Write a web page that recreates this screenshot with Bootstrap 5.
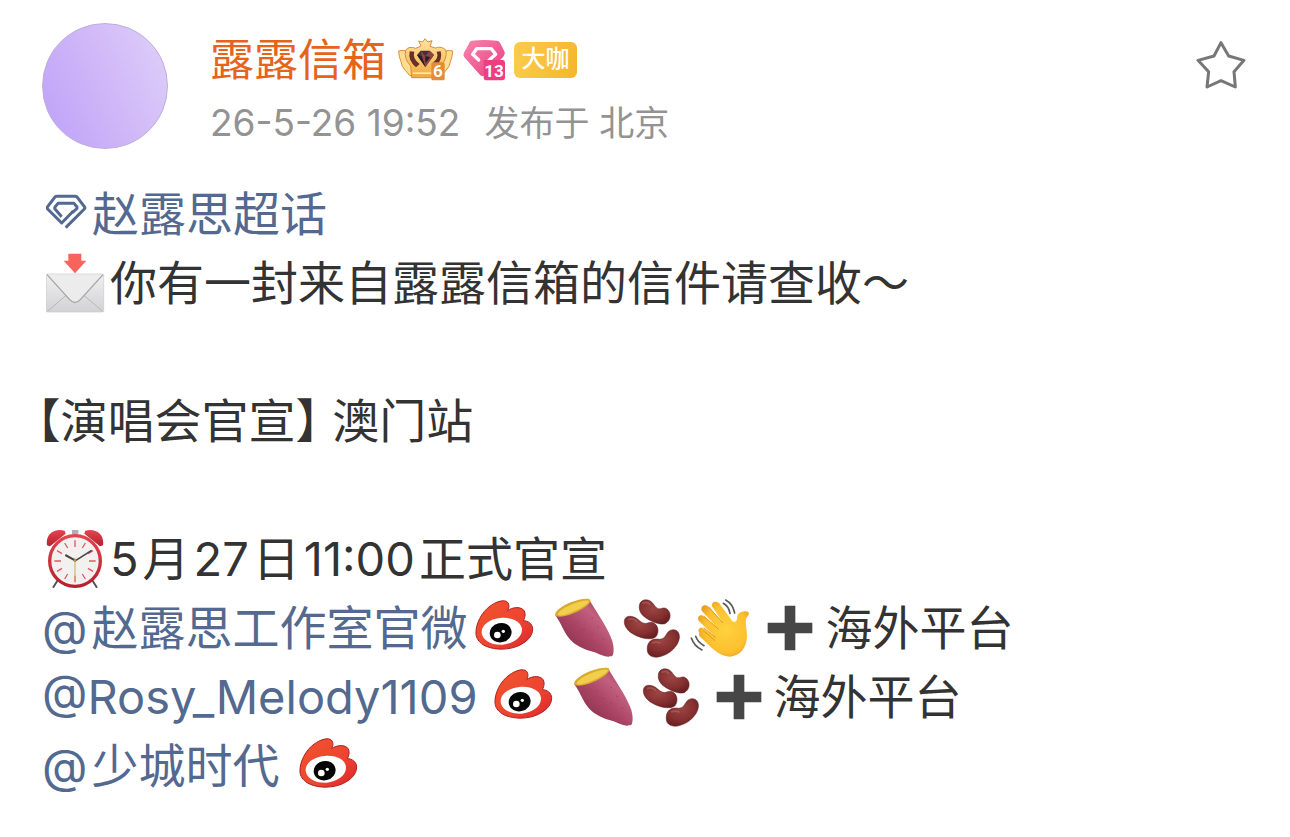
<!DOCTYPE html>
<html lang="zh-CN">
<head>
<meta charset="utf-8">
<meta name="viewport" content="width=device-width, initial-scale=1">
<title>露露信箱</title>
<link rel="stylesheet" href="https://cdn.jsdelivr.net/npm/bootstrap@5.3.0/dist/css/bootstrap.min.css">
<style>
body{background:#fff;color:#333;font-family:Inter,"Noto Sans CJK SC",sans-serif}
.post{padding:23px 44px 32px 42px}
.avatar{width:126px;height:126px;border:1px solid #bfaedb;background:linear-gradient(65deg,#c0a4f8 8%,#d0b8f8 52%,#dccbf9 90%)}
.who{margin-left:42px;padding-top:4px}
.nick{font-size:44px;line-height:66px;color:#e6631a;margin-right:12px}
.vip{width:63px;height:36px;border-radius:6px;font-size:24px;line-height:34px;font-weight:500;color:#fff;background:linear-gradient(100deg,#fccb4c,#f5b62e)}
.meta{font-size:35px;line-height:60px;color:#939393}
.meta time{font-size:37px}
.fav{margin-top:18px}
.body-text{margin-top:26px;font-size:47px}
.line{min-height:69px;line-height:69px}
.line a{color:#53698f}
.num{margin:0 4px}
.num:first-child{margin-left:0}
.apart{margin-left:20px}
.half{font-feature-settings:"halt";margin-left:-5px}
svg{display:block;flex:none}
</style>
</head>
<body>
<svg width="0" height="0" class="position-absolute" aria-hidden="true">
<defs>
<linearGradient id="gold" x1="0" y1="0" x2="0" y2="1"><stop offset="0" stop-color="#ffe7a4"/><stop offset="1" stop-color="#f3a93c"/></linearGradient>
<linearGradient id="pink" x1="0" y1="0" x2="1" y2="1"><stop offset="0" stop-color="#f986ab"/><stop offset="1" stop-color="#e83c83"/></linearGradient>
<linearGradient id="paper" x1="0" y1="0" x2="0" y2="1"><stop offset="0" stop-color="#f0f0f1"/><stop offset="1" stop-color="#d2d2d4"/></linearGradient>
<linearGradient id="flame" x1="0" y1="0" x2="1" y2="1"><stop offset="0" stop-color="#f0542d"/><stop offset=".6" stop-color="#ee4431"/><stop offset="1" stop-color="#d9252b"/></linearGradient>
<linearGradient id="skin" x1="0" y1="1" x2="1" y2="0"><stop offset="0" stop-color="#75273f"/><stop offset=".45" stop-color="#a94364"/><stop offset=".7" stop-color="#c3607f"/><stop offset="1" stop-color="#8c2e4b"/></linearGradient>
<radialGradient id="bean" cx=".45" cy=".35" r=".7"><stop offset="0" stop-color="#9c4542"/><stop offset=".6" stop-color="#853031"/><stop offset="1" stop-color="#651f20"/></radialGradient>
<radialGradient id="hand" cx=".55" cy=".5" r=".6"><stop offset="0" stop-color="#ffd23e"/><stop offset=".7" stop-color="#fcc02f"/><stop offset="1" stop-color="#e99c1f"/></radialGradient>
<linearGradient id="ring" x1="0" y1="0" x2="0" y2="1"><stop offset="0" stop-color="#e2454f"/><stop offset="1" stop-color="#b5202c"/></linearGradient>
<symbol id="weibo" viewBox="15 20 177 180">
<path d="M18 128C16 100 34 62 62 43C78 32 97 25 109 30C118 35 119 48 113 58C126 48 148 45 160 55C168 63 166 78 160 88C174 88 187 97 188 112C189 136 166 157 133 168C102 177 63 175 39 160C26 151 19 141 18 128Z" fill="url(#flame)" stroke="#ad2220" stroke-width="3"/>
<path d="M35 124C34 101 58 83 92 80C125 77 153 90 156 112C158 138 130 157 98 160C63 162 37 146 35 124Z" fill="#fff"/>
<ellipse cx="92" cy="124" rx="33" ry="29" transform="rotate(-12 92 124)" fill="#050505"/><circle cx="82" cy="131" r="10" fill="#fff"/><circle cx="100" cy="120" r="5" fill="#fff"/>
</symbol>
<symbol id="potato" viewBox="252 20 183 183">
<path d="M256 76C266 84 276 112 292 137C308 160 332 174 361 182C382 187 398 199 416 199C422 196 424 201 429 193C432 184 432 170 427 152C418 123 390 80 360 32Z" fill="url(#skin)"/>
<path d="M255 75C254 62 276 46 304 35C332 25 357 22 361 29C364 40 340 57 311 69C287 79 260 83 255 75Z" fill="#d8ab2d"/><path d="M263 73C265 63 285 50 308 41C332 31 353 28 357 32C354 43 332 55 308 65C287 74 269 78 263 73Z" fill="#f1ce4b"/>
<path d="M365 85l3-2M383 110l3 2M340 118l4-1M365 132l3 2M398 148l4-2M323 95l2 2" stroke="#8f3855" stroke-width="2" stroke-linecap="round"/>
</symbol>
<symbol id="beans" viewBox="27 20 174 180">
<g fill="url(#bean)" stroke="#5a1c1c" stroke-width="1.5"><path d="M76 43C78 27 94 21 109 29C120 36 123 49 132 52C142 54 151 44 162 56C173 69 170 89 153 97C138 102 113 91 96 80C81 70 74 57 76 43Z"/>
<path d="M31 89C32 76 46 71 62 78C75 84 79 94 91 96C102 98 109 88 121 96C134 104 136 126 125 137C110 148 79 141 57 128C40 118 30 104 31 89Z"/>
<path d="M101 183C96 164 105 147 119 144C132 141 141 148 151 138C159 128 161 117 176 115C190 114 198 125 196 141C193 164 169 187 142 195C124 201 106 197 101 183Z"/></g>
<path d="M87 36q12-7 20 3M44 84q14-5 24 6M116 154q12-4 22 1" stroke="#c0827c" stroke-opacity=".4" stroke-width="5" stroke-linecap="round" fill="none"/>
</symbol>
<symbol id="plus" viewBox="459 42 138 138"><path d="M512 44h32v51h51v32h-51v51h-32v-51h-51V95h51Z" fill="#464646"/></symbol>
</defs>
</svg>

<main class="container-fluid post">
<header class="d-flex align-items-start">
<div class="avatar rounded-circle flex-shrink-0" role="img" aria-label="头像"></div>
<div class="who flex-grow-1">
<div class="d-flex align-items-center">
<a href="#" class="nick text-decoration-none">露露信箱</a>
<svg class="overflow-visible" width="56" height="44" viewBox="25 18 168 132" aria-label="等级 6">
<g stroke="#dc8b3e" stroke-width="3" stroke-linejoin="round"><path d="M27 57Q47 51 63 67L76 137Q56 132 48 116Q35 104 34 89Q27 73 27 57ZM189 57Q169 51 153 67L140 137Q160 132 168 116Q181 104 182 89Q189 73 189 57Z" fill="#ffdf8e"/>
<path d="M48 54Q59 41 78 49L94 42L87 27L99 30L106 20L115 30L127 26L121 43L137 48Q157 41 169 55Q173 82 153 102L150 137H66L63 102Q42 80 48 54Z" fill="url(#gold)"/></g>
<path d="M60 58Q54 86 79 106L90 96Q67 79 74 59ZM153 58Q160 82 139 103L129 93Q149 77 141 59Z" fill="#67312a"/><path d="M82 69L93 56H120L133 69L107 105Z" fill="#42303a"/><path d="M93 56L107 72L120 56L133 69L107 105L96 72Z" fill="#8f4440"/><path d="M82 69L96 72L107 105ZM107 72L122 76L107 93Z" fill="#241e2a"/><path d="M69 121h60v5H69" fill="#ffe9a3"/>
<rect x="125" y="91" width="40" height="54" rx="5" fill="#e38c38"/><text x="145" y="136" text-anchor="middle" font-size="51" font-weight="700" fill="#fff" font-family="Roboto,sans-serif">6</text></svg>
<svg class="ms-2 overflow-visible" width="44" height="42" viewBox="213 24 132 126" aria-label="等级 13">
<path d="M242 29Q279 25 317 29Q323 29 327 35L341 63Q343 70 337 77L280 133Q274 138 268 133L220 79Q215 72 219 65L236 34Q238 30 242 29Z" fill="url(#pink)"/>
<path d="M263 87L245 70L257 53H301L314 70L294 88" fill="none" stroke="#fff" stroke-width="10" stroke-linejoin="round" stroke-linecap="round"/>
<path d="M278 87H334Q342 87 342 96V139Q342 148 333 148H285Q278 148 278 139Z" fill="#ec3e81"/><text x="309" y="137" text-anchor="middle" font-size="51" font-weight="700" fill="#fff" font-family="Roboto,sans-serif">13</text></svg>
<span class="vip ms-2 text-center">大咖</span>
</div>
<div class="meta d-flex flex-wrap align-items-center"><time>26-5-26 19:52</time><span class="ms-4">发布于 北京</span></div>
</div>
<button type="button" class="fav btn p-0 border-0" aria-label="收藏"><svg width="50" height="48" viewBox="48 33 150 144"><path d="M123 38L146 78L192 91L162 125L166 171L123 152L81 171L86 125L54 91L102 78Z" fill="none" stroke="#777" stroke-width="9" stroke-linejoin="round"/></svg></button>
</header>

<article class="body-text">
<div class="line d-flex align-items-center"><a href="#" class="d-flex align-items-center text-decoration-none">
<svg class="ms-1 me-1" width="42" height="42" viewBox="48 40 126 126" aria-hidden="true"><g fill="none" stroke="#53698f" stroke-width="9" stroke-linejoin="round"><path d="M107 144L163 88Q166 85 163 81L142 53Q140 50 136 50H80Q76 50 74 53L53 81Q50 85 53 88L95 130L130 94"/><path d="M95 111L75 88Q73 85 75 82L84 71H132L141 82Q142 86 139 88L127 99"/></g></svg><span>赵露思超话</span></a></div>
<div class="line d-flex align-items-center"><svg class="ms-1 me-1" width="60" height="61" viewBox="48 215 180 183" role="img" aria-label="来信">
<rect x="49" y="281" width="172" height="114" rx="4" fill="url(#paper)" stroke="#c9c9ca" stroke-width="2"/><path d="M52 393L112 342M218 393L158 342" stroke="#b7b7b9" stroke-width="3"/><path d="M51 283L119 358Q135 375 151 358L219 283" fill="#ececed" stroke="#a5a5a7" stroke-width="4"/><path d="M115 220H154V241H169L135 279L101 241H115Z" fill="#f8645b"/></svg><span>你有一封来自露露信箱的信件请查收～</span></div>
<div class="line"></div>
<div class="line"><span class="half d-inline-block">【演唱会官宣】</span> 澳门站</div>
<div class="line"></div>
<div class="line d-flex align-items-center"><svg class="ms-1 me-1" width="60" height="61" viewBox="48 36 180 183" role="img" aria-label="闹钟">
<path d="M85 190L69 215M185 190L201 215" stroke="#555" stroke-width="6"/><path d="M51 88C46 57 70 36 104 44L107 53L60 91ZM219 88C224 57 200 36 166 44L163 53L210 91Z" fill="url(#ring)"/><path d="M126 42h19v14h-19z" fill="#a9b0b8"/>
<circle cx="135" cy="135" r="76" fill="#f3f0f0" stroke="url(#ring)" stroke-width="10"/>
<g stroke="#df5964" stroke-width="4"><path d="M135 73v20M135 179v20M73 135h20M177 135h20M104 81l9 15M166 81l-9 15M104 189l9-15M166 189l-9-15M81 104l15 9M189 104l-15 9M81 166l15-9M189 166l-15-9"/></g><path d="M135 133L106 117" stroke="#444" stroke-width="6"/><path d="M133 136L185 103" stroke="#444" stroke-width="5"/><path d="M135 125V196" stroke="#c9a95b" stroke-width="3"/><circle cx="135" cy="134" r="4" fill="#b89245"/></svg><span><span class="num">5</span>月<span class="num">27</span>日<span class="num">11:00</span>正式官宣</span></div>
<div class="line d-flex flex-wrap align-items-center"><a href="#" class="text-decoration-none"><span class="num">@</span>赵露思工作室官微</a><svg class="ms-2" width="59" height="60" role="img" aria-label="微博"><use href="#weibo"/></svg>
<svg class="apart me-2" width="61" height="61" role="img" aria-label="红薯"><use href="#potato"/></svg><svg class="me-2" width="58" height="60" role="img" aria-label="豆"><use href="#beans"/></svg>
<svg class="me-3" width="62" height="62" viewBox="228 17 186 186" role="img" aria-label="挥手">
<path d="M303 154L259 124C252 114 261 106 271 111L307 138L257 88C251 76 262 67 273 75L316 113L266 58C262 44 275 37 287 46L329 93L297 45C294 31 309 26 320 37L357 88C365 95 371 91 372 82C372 68 381 59 398 60C409 60 411 69 402 77C394 88 402 111 402 135C401 169 382 195 350 196C326 196 305 179 285 159L260 135C254 123 264 113 275 120L303 146Z" fill="url(#hand)"/>
<path d="M307 138L273 110M316 113L274 76M329 94L288 48M272 119L305 147" stroke="#de961d" stroke-width="3" fill="none" stroke-linecap="round"/><path d="M331 36Q347 45 351 66M338 26Q360 38 365 65M248 135Q254 153 273 163M235 140Q243 164 267 176" stroke="#5a5a5c" stroke-width="5" fill="none" stroke-linecap="round"/></svg>
<svg width="46" height="46" role="img" aria-label="加"><use href="#plus"/></svg><span class="ms-2 ps-1">海外平台</span></div>
<div class="line d-flex flex-wrap align-items-center"><a href="#" class="text-decoration-none">@Rosy_Melody1109</a><svg class="ms-3" width="59" height="60" role="img" aria-label="微博"><use href="#weibo"/></svg>
<svg class="apart me-2" width="61" height="61" role="img" aria-label="红薯"><use href="#potato"/></svg><svg class="me-3" width="58" height="60" role="img" aria-label="豆"><use href="#beans"/></svg><svg width="46" height="46" role="img" aria-label="加"><use href="#plus"/></svg><span class="ms-2 ps-1">海外平台</span></div>
<div class="line d-flex align-items-center"><a href="#" class="text-decoration-none"><span class="num">@</span>少城时代</a><svg class="apart" width="59" height="60" role="img" aria-label="微博"><use href="#weibo"/></svg></div>
</article>
</main>
<script src="https://cdn.jsdelivr.net/npm/bootstrap@5.3.0/dist/js/bootstrap.bundle.min.js"></script>
</body>
</html>
